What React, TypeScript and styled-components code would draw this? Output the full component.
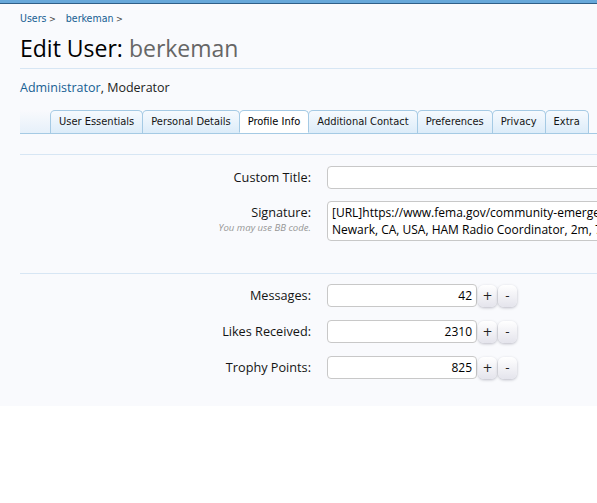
import React from "react";
import styled, { createGlobalStyle } from "styled-components";

const Global = createGlobalStyle`
  html, body { margin: 0; padding: 0; background: #ffffff; overflow: hidden; }
  body { font-family: "Open Sans", "Noto Sans", sans-serif; }
`;

const Page = styled.div`
  background: #f9fafd;
  border-top: 3px solid #67a8da;
  box-shadow: inset 0 1px 0 #2f5f88;
  padding: 8px 0 27px 20px;
  width: 760px;
`;

const Breadcrumb = styled.nav`
  display: flex;
  gap: 10px;
  font-family: "DejaVu Sans Condensed", "DejaVu Sans", sans-serif;
  font-size: 10.5px;
  line-height: 14px;
  color: #176093;
`;

const Crumb = styled.span`
  &::after { content: " >"; color: #444; font-size: 9px; }
`;

const Title = styled.h1`
  margin: 7px 0 0;
  padding-bottom: 5px;
  border-bottom: 1px solid #d7e6f4;
  font-family: "Open Sans", sans-serif;
  font-weight: 400;
  font-size: 23px;
  line-height: 30px;
  color: #000;
`;

const TitleName = styled.span`
  color: #666;
`;

const Groups = styled.div`
  margin-top: 10px;
  font-size: 12.5px;
  line-height: 17px;
  color: #222;
`;

const GroupLink = styled.a`
  color: #176093;
  text-decoration: none;
`;

const TabBar = styled.ul`
  display: flex;
  list-style: none;
  margin: 14px 0 20px;
  padding: 0;
  border-bottom: 1px solid #a5cae4;
  height: 23px;
`;

const TabLead = styled.li`
  width: 30px;
  background: linear-gradient(to top, #e6f0fa, rgba(230, 240, 250, 0));
`;

const Tab = styled.li<{ $active?: boolean }>`
  height: 23px;
  box-sizing: border-box;
  padding: 0 8px;
  margin-right: -1px;
  border: 1px solid #a5cae4;
  border-bottom: ${(p) => (p.$active ? "1px solid #ffffff" : "none")};
  border-radius: 5px 5px 0 0;
  background: ${(p) =>
    p.$active ? "#ffffff" : "linear-gradient(to bottom, #f6fafe, #dcecf9)"};
  font-family: "DejaVu Sans Condensed", "DejaVu Sans", sans-serif;
  font-size: 11px;
  line-height: 22px;
  color: ${(p) => (p.$active ? "#000" : "#141414")};
  white-space: nowrap;
  position: relative;
  z-index: ${(p) => (p.$active ? 1 : 0)};
`;

const Section = styled.div<{ $padTop: number; $padBottom: number }>`
  border-top: 1px solid #d7e6f4;
  padding: ${(p) => p.$padTop}px 0 ${(p) => p.$padBottom}px;
  display: flex;
  flex-direction: column;
`;

const Row = styled.div<{ $gap?: number }>`
  display: grid;
  grid-template-columns: 291px auto;
  column-gap: 16px;
  margin-bottom: ${(p) => p.$gap ?? 0}px;
`;

const Label = styled.div`
  text-align: right;
  font-size: 12.7px;
  line-height: 17px;
  color: #141414;
  padding-top: 3px;
`;

const Hint = styled.div`
  font-size: 9.6px;
  font-style: italic;
  color: #969696;
  line-height: 14px;
`;

const TextInput = styled.div<{ $w: number; $h?: number; $align?: string }>`
  width: ${(p) => p.$w}px;
  height: ${(p) => p.$h ?? 23}px;
  box-sizing: border-box;
  background: #fff;
  border: 1px solid #c8c8c8;
  border-radius: 4px;
  padding: 2px 4px;
  font-size: 12px;
  line-height: 17px;
  color: #000;
  text-align: ${(p) => p.$align ?? "left"};
  white-space: nowrap;
  overflow: hidden;
`;

const SpinGroup = styled.div`
  display: flex;
  align-items: center;
  gap: 1px;
`;

const SpinButton = styled.button`
  width: 19px;
  height: 22px;
  padding: 0;
  border: none;
  border-radius: 6px;
  background: linear-gradient(to bottom, #ffffff, #e4e4ec);
  box-shadow: 0 1px 3px rgba(0, 0, 30, 0.25);
  font-family: "DejaVu Sans", sans-serif;
  font-size: 12px;
  line-height: 20px;
  color: #222;
`;

const counters = [
  { label: "Messages:", value: "42" },
  { label: "Likes Received:", value: "2310" },
  { label: "Trophy Points:", value: "825" },
];

const tabs = [
  "User Essentials",
  "Personal Details",
  "Profile Info",
  "Additional Contact",
  "Preferences",
  "Privacy",
  "Extra",
];

export default function App() {
  return (
    <>
      <Global />
      <Page>
        <Breadcrumb>
          <Crumb>Users</Crumb>
          <Crumb>berkeman</Crumb>
        </Breadcrumb>
        <Title>
          Edit User: <TitleName>berkeman</TitleName>
        </Title>
        <Groups>
          <GroupLink href="#">Administrator</GroupLink>, Moderator
        </Groups>
        <TabBar>
          <TabLead />
          {tabs.map((t) => (
            <Tab key={t} $active={t === "Profile Info"}>
              {t}
            </Tab>
          ))}
        </TabBar>
        <Section $padTop={11} $padBottom={32}>
          <Row $gap={12}>
            <Label>Custom Title:</Label>
            <TextInput $w={360} />
          </Row>
          <Row>
            <Label>
              Signature:
              <Hint>You may use BB code.</Hint>
            </Label>
            <TextInput $w={360} $h={40}>
              [URL]https://www.fema.gov/community-emergency-response-teams[/URL]
              <br />
              Newark, CA, USA, HAM Radio Coordinator, 2m, 70cm
            </TextInput>
          </Row>
        </Section>
        <Section $padTop={10} $padBottom={0}>
          {counters.map((c, i) => (
            <Row key={c.label} $gap={i < 2 ? 13 : 0}>
              <Label>{c.label}</Label>
              <SpinGroup>
                <TextInput $w={150} $align="right">
                  {c.value}
                </TextInput>
                <SpinButton>+</SpinButton>
                <SpinButton>-</SpinButton>
              </SpinGroup>
            </Row>
          ))}
        </Section>
      </Page>
    </>
  );
}
